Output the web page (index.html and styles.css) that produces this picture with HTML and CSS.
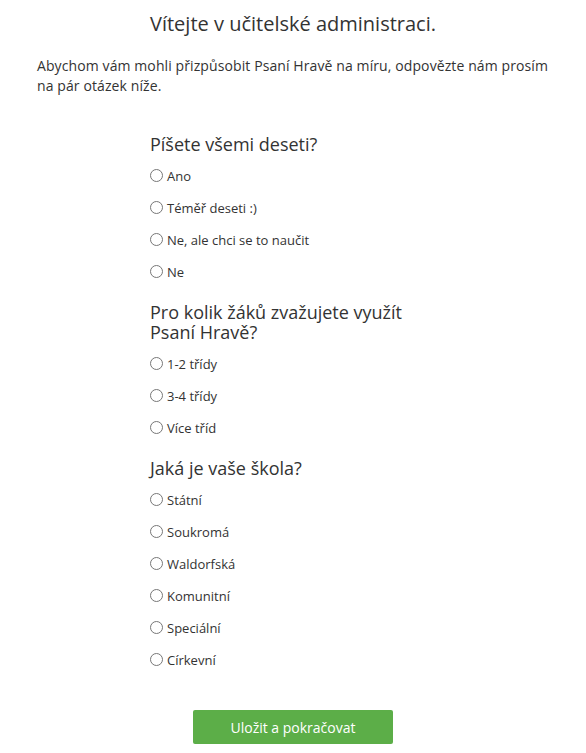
FILE: index.html
```html
<!DOCTYPE html>
<html lang="cs">
<head>
  <meta charset="UTF-8">
  <meta name="viewport" content="width=device-width, initial-scale=1.0">
  <title>Učitelská administrace</title>
  <link rel="stylesheet" href="styles.css">
</head>
<body>
  <div class="container">
    <h1>Vítejte v učitelské administraci.</h1>
    <p class="intro">Abychom vám mohli přizpůsobit Psaní Hravě na míru, odpovězte nám prosím na pár otázek níže.</p>

    <form class="survey">
      <!-- Typing -->
      <div class="question">
        <h2>Píšete všemi deseti?</h2>
        <label class="option"><input type="radio" name="typing"> Ano</label>
        <label class="option"><input type="radio" name="typing"> Téměř deseti :)</label>
        <label class="option"><input type="radio" name="typing"> Ne, ale chci se to naučit</label>
        <label class="option"><input type="radio" name="typing"> Ne</label>
      </div>

      <!-- Classes -->
      <div class="question">
        <h2>Pro kolik žáků zvažujete využít Psaní Hravě?</h2>
        <label class="option"><input type="radio" name="classes"> 1-2 třídy</label>
        <label class="option"><input type="radio" name="classes"> 3-4 třídy</label>
        <label class="option"><input type="radio" name="classes"> Více tříd</label>
      </div>

      <!-- School -->
      <div class="question">
        <h2>Jaká je vaše škola?</h2>
        <label class="option"><input type="radio" name="school"> Státní</label>
        <label class="option"><input type="radio" name="school"> Soukromá</label>
        <label class="option"><input type="radio" name="school"> Waldorfská</label>
        <label class="option"><input type="radio" name="school"> Komunitní</label>
        <label class="option"><input type="radio" name="school"> Speciální</label>
        <label class="option"><input type="radio" name="school"> Církevní</label>
      </div>

      <div class="actions">
        <button type="submit" class="save-btn">Uložit a pokračovat</button>
      </div>
    </form>
  </div>
</body>
</html>
```

FILE: styles.css
```css
/* General Styles */
body {
  font-family: "Open Sans", Arial, sans-serif;
  margin: 0;
  padding: 0;
  background: #fff;
  color: #333;
}

.container {
  padding: 10px 37px 0 37px;
}

h1 {
  margin: 0;
  font-size: 20px;
  font-weight: normal;
  line-height: 28px;
  text-align: center;
}

.intro {
  margin: 18px 0 0 0;
  font-size: 14px;
  letter-spacing: 0.1px;
  line-height: 20px;
}

/* Survey */
.survey {
  width: 286px;
  margin: 0 auto;
  padding-top: 38px;
}

.question h2 {
  margin: 0 0 6px 0;
  font-size: 18px;
  font-weight: normal;
  line-height: 20px;
}

.question {
  margin-bottom: 14px;
}

.option {
  display: flex;
  align-items: center;
  height: 32px;
  font-size: 13px;
  cursor: pointer;
}

.option input {
  appearance: none;
  width: 13px;
  height: 13px;
  margin: 0 4px 0 0;
  border: 1px solid #777;
  border-radius: 50%;
  background: #fff;
  position: relative;
  top: -1px;
}

.option input:checked {
  background: radial-gradient(#333 35%, #fff 40%);
}

.actions {
  display: flex;
  justify-content: center;
  padding-top: 20px;
}

.save-btn {
  width: 200px;
  height: 34px;
  background: #5cae48;
  color: #fff;
  border: none;
  border-radius: 2px;
  font-family: inherit;
  font-size: 14px;
  cursor: pointer;
}

.save-btn:hover {
  background: #4f9a3d;
}
```
